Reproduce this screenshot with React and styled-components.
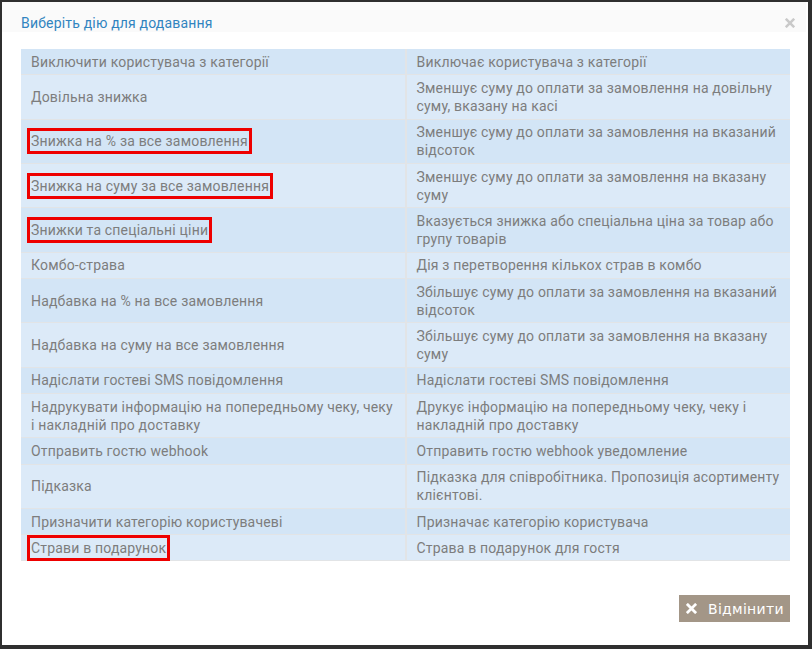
import React from "react";
import styled, { createGlobalStyle } from "styled-components";

const Global = createGlobalStyle`
  html, body { margin: 0; padding: 0; }
  body {
    background: #2f2f2f;
    font-family: Roboto, "Liberation Sans", sans-serif;
    width: 812px;
    height: 649px;
    overflow: hidden;
  }
  #root { height: 100%; }
`;

const Frame = styled.div`
  box-sizing: border-box;
  height: 649px;
  padding: 2px 4px 4px 2px;
`;

const Modal = styled.div`
  background: #fff;
  height: 100%;
  display: flex;
  flex-direction: column;
`;

const Header = styled.div`
  height: 41px;
  background: linear-gradient(#fafafa 0, #fafafa 30px, #fff 30px);
  margin-right: 2px;
  display: flex;
  align-items: center;
  justify-content: space-between;
  padding: 0 10px 0 19px;
`;

const Title = styled.h4`
  margin: 0;
  font-size: 14px;
  font-weight: 400;
  letter-spacing: 0.18px;
  color: #3184c0;
`;

const Close = styled.button`
  border: 0;
  background: none;
  padding: 0;
  width: 12px;
  height: 12px;
  display: flex;
  align-items: center;
  justify-content: center;
  cursor: pointer;
`;

const Body = styled.div`
  padding: 6px 18px 0 19px;
  flex: 1;
`;

const Table = styled.table`
  width: 100%;
  border-collapse: collapse;
  table-layout: fixed;
  font-size: 14px;
  letter-spacing: 0.18px;
  color: #7d7d7d;
`;

const Row = styled.tr`
  background: ${(p) => (p.$odd ? "#d3e5f6" : "#dceaf8")};
  border-bottom: 1px solid #e2e4e6;
`;

const Cell = styled.td`
  padding: 3.5px 5px 3.5px 10px;
  line-height: 18.2px;
  vertical-align: middle;
  & + & {
    border-left: 2px solid #e2e4e6;
  }
`;

const Marked = styled.span`
  display: inline-block;
  outline: 3px solid #ee0000;
  outline-offset: 1px;
`;

const Footer = styled.div`
  display: flex;
  justify-content: flex-end;
  padding: 0 18px 23px 0;
`;

const Button = styled.button`
  height: 27px;
  width: 111px;
  border: 0;
  background: #a39687;
  color: #fff;
  font-family: "DejaVu Sans", Verdana, sans-serif;
  font-size: 14px;
  letter-spacing: 0.3px;
  display: flex;
  align-items: center;
  gap: 11px;
  padding: 0 0 0 7px;
  cursor: pointer;
`;

const rows = [
  ["Виключити користувача з категорії", "Виключає користувача з категорії"],
  ["Довільна знижка", "Зменшує суму до оплати за замовлення на довільну суму, вказану на касі"],
  ["Знижка на % за все замовлення", "Зменшує суму до оплати за замовлення на вказаний відсоток", true],
  ["Знижка на суму за все замовлення", "Зменшує суму до оплати за замовлення на вказану суму", true],
  ["Знижки та спеціальні ціни", "Вказується знижка або спеціальна ціна за товар або групу товарів", true],
  ["Комбо-страва", "Дія з перетворення кількох страв в комбо"],
  ["Надбавка на % на все замовлення", "Збільшує суму до оплати за замовлення на вказаний відсоток"],
  ["Надбавка на суму на все замовлення", "Збільшує суму до оплати за замовлення на вказану суму"],
  ["Надіслати гостеві SMS повідомлення", "Надіслати гостеві SMS повідомлення"],
  ["Надрукувати інформацію на попередньому чеку, чеку і накладній про доставку", "Друкує інформацію на попередньому чеку, чеку і накладній про доставку"],
  ["Отправить гостю webhook", "Отправить гостю webhook уведомление"],
  ["Підказка", "Підказка для співробітника. Пропозиція асортименту клієнтові."],
  ["Призначити категорію користувачеві", "Призначає категорію користувача"],
  ["Страви в подарунок", "Страва в подарунок для гостя", true],
];

const Cross = ({ size, color }) => (
  <svg width={size} height={size} viewBox="0 0 12 12">
    <path d="M2 2 L10 10 M10 2 L2 10" stroke={color} strokeWidth="3" strokeLinecap="square" />
  </svg>
);

export default function App() {
  return (
    <>
      <Global />
      <Frame>
        <Modal>
          <Header>
            <Title>Виберіть дію для додавання</Title>
            <Close aria-label="close">
              <Cross size={10} color="#c9c9c9" />
            </Close>
          </Header>
          <Body>
            <Table>
              <tbody>
                {rows.map(([a, b, mark], i) => (
                  <Row key={i} $odd={i % 2 === 0}>
                    <Cell>{mark ? <Marked>{a}</Marked> : a}</Cell>
                    <Cell>{b}</Cell>
                  </Row>
                ))}
              </tbody>
            </Table>
          </Body>
          <Footer>
            <Button>
              <Cross size={11} color="#fff" />
              Відмінити
            </Button>
          </Footer>
        </Modal>
      </Frame>
    </>
  );
}
